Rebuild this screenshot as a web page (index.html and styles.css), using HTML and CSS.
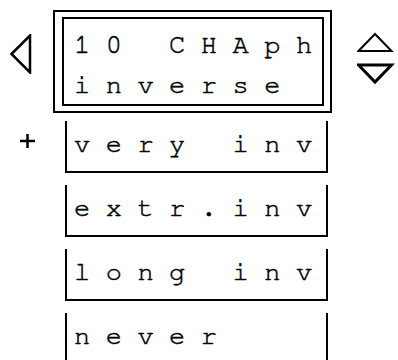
FILE: index.html
```html
<!DOCTYPE html>
<html lang="en">
<head>
<meta charset="UTF-8">
<meta name="viewport" content="width=device-width, initial-scale=1.0">
<title>Inverse Menu</title>
<link rel="stylesheet" href="styles.css">
</head>
<body>

<div class="screen">
  <div class="head">
    <svg class="nav-left" width="22" height="40" viewBox="0 0 22 40">
      <polygon points="1.5,20 20,1.5 20,38.5" fill="none" stroke="#000" stroke-width="2.5" stroke-linejoin="miter"/>
    </svg>

    <div class="frame">
      <div class="lcd">
        <div class="lcd-line">10 CHAph</div>
        <div class="lcd-line">inverse</div>
      </div>
    </div>

    <svg class="nav-updown" width="38" height="54" viewBox="0 0 38 54">
      <polygon points="18,2 1.5,19 34.5,19" fill="none" stroke="#000" stroke-width="2"/>
      <polygon points="1.5,33 34.5,33 18,50" fill="none" stroke="#000" stroke-width="3"/>
    </svg>
  </div>

  <!-- option list, first one is marked -->
  <ul class="options">
    <li>
      <span class="mark">
        <svg width="16" height="16" viewBox="0 0 16 16">
          <path d="M0 8 H15 M7.5 1 V15" stroke="#000" stroke-width="2.5" fill="none"/>
        </svg>
      </span>
      <span class="opt">very inv</span>
    </li>
    <li><span class="mark"></span><span class="opt">extr.inv</span></li>
    <li><span class="mark"></span><span class="opt">long inv</span></li>
    <li><span class="mark"></span><span class="opt">never</span></li>
  </ul>
</div>

</body>
</html>
```

FILE: styles.css
```css
/* LCD menu screen */
body {
  margin: 0;
  padding: 0;
  background-color: #fff;
  color: #000;
  font-family: "Nimbus Mono PS", "Nimbus Mono L", "FreeMono", "Courier 10 Pitch", "Liberation Mono", monospace;
  overflow: hidden;
}

.screen {
  width: 398px;
  height: 360px;
}

.head {
  display: flex;
  align-items: flex-start;
  padding-top: 10px;
}

.nav-left {
  display: block;
  margin-left: 10px;
  margin-top: 24px;
}

.frame {
  box-sizing: border-box;
  width: 279px;
  height: 103px;
  margin-left: 21px;
  border: 2px solid #000;
  padding: 5px 6px 5px 7px;
}

.lcd {
  box-sizing: border-box;
  width: 262px;
  height: 89px;
  border: 2px solid #000;
  padding: 6px 0 0 10px;
}

.lcd-line,
.opt {
  font-size: 27px;
  line-height: 40px;
  letter-spacing: 15.5px;
  white-space: pre;
  -webkit-text-stroke: 0.5px #000;
}

.nav-updown {
  display: block;
  margin-left: 25px;
  margin-top: 22px;
}

.options {
  list-style: none;
  margin: 8px 0 0 0;
  padding: 0;
  display: flex;
  flex-direction: column;
  gap: 12px;
}

.options li {
  display: flex;
}

.mark {
  width: 65px;
  flex-shrink: 0;
}

.mark svg {
  display: block;
  margin: 12px 0 0 20px;
}

.opt {
  box-sizing: border-box;
  width: 263px;
  height: 52px;
  border: 2px solid #000;
  border-top: none;
  padding: 3px 0 0 7px;
  overflow: hidden;
}
```
